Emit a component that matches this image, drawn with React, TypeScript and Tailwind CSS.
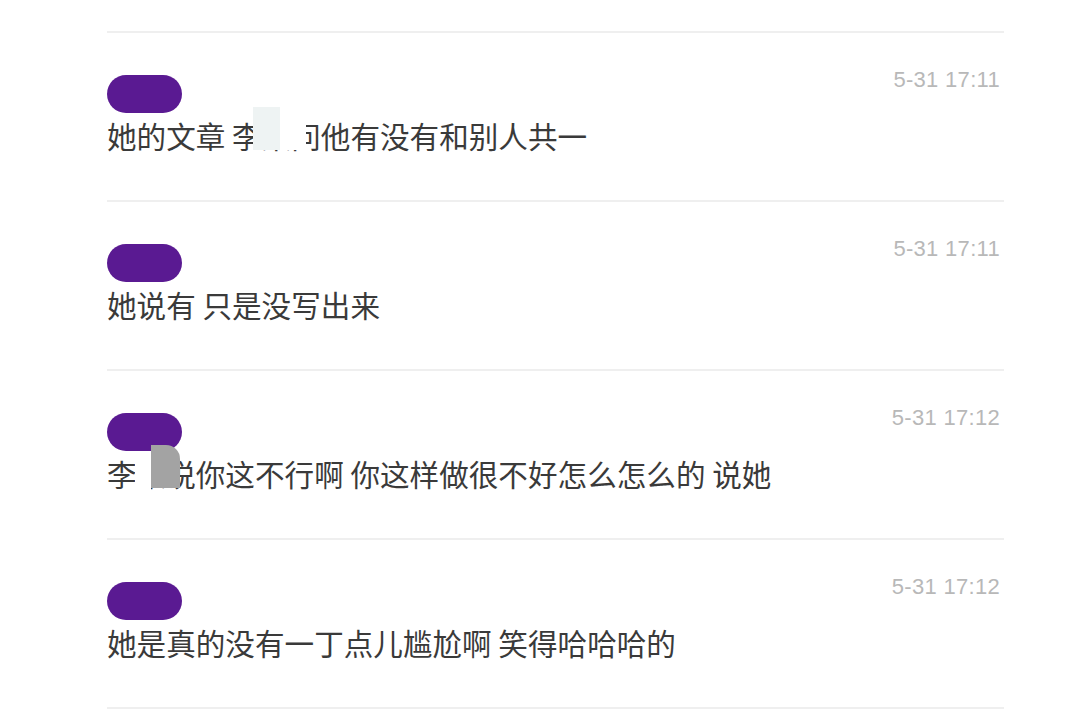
import * as React from 'react';

type Comment = {
  time: string;
  text: string;
  masks?: { left: number; top: number; width: number; height: number; color: string; rounded?: boolean }[];
};

const comments: Comment[] = [
  {
    time: '5-31 17:11',
    text: '她的文章 李某问他有没有和别人共一',
    masks: [
      { left: 146, top: -11, width: 27, height: 43, color: '#eef3f3' },
      { left: 173, top: -11, width: 26, height: 43, color: '#ffffff' },
    ],
  },
  { time: '5-31 17:11', text: '她说有 只是没写出来' },
  {
    time: '5-31 17:12',
    text: '李某说你这不行啊 你这样做很不好怎么怎么的 说她',
    masks: [
      { left: 28, top: -4, width: 16, height: 40, color: '#ffffff' },
      { left: 44, top: -11, width: 29, height: 43, color: '#a3a3a3', rounded: true },
    ],
  },
  { time: '5-31 17:12', text: '她是真的没有一丁点儿尴尬啊 笑得哈哈哈的' },
];

const CommentRow: React.FC<{ c: Comment }> = ({ c }) => (
  <div className="border-t-2 border-[#efefef] pt-[42px] pb-[46px]">
    <div className="flex items-start justify-between">
      <div className="h-[38px] w-[75px] rounded-full bg-[#5a1a92]" />
      <span className="-mt-[9px] mr-[4px] text-[22px] leading-[28px] tracking-[0.3px] text-[#b8b8b8] font-['Liberation_Sans',sans-serif]">
        {c.time}
      </span>
    </div>
    <div className="mt-[5px]">
      <span className="relative inline-block text-[29.6px] leading-[36px] text-[#3a3a3a]">
        {c.text}
        {c.masks?.map((m, i) => (
          <span
            key={i}
            className={m.rounded ? 'absolute rounded-tr-[14px]' : 'absolute'}
            style={{ left: m.left, top: m.top, width: m.width, height: m.height, background: m.color }}
          />
        ))}
      </span>
    </div>
  </div>
);

const App: React.FC = () => {
  return (
    <div className="min-h-[720px] bg-white pt-[31px] font-['Noto_Sans_CJK_SC',sans-serif]">
      <div className="ml-[107px] w-[897px]">
        {comments.map((c, i) => (
          <CommentRow key={i} c={c} />
        ))}
        <div className="border-t-2 border-[#efefef]" />
      </div>
    </div>
  );
};

export default App;
